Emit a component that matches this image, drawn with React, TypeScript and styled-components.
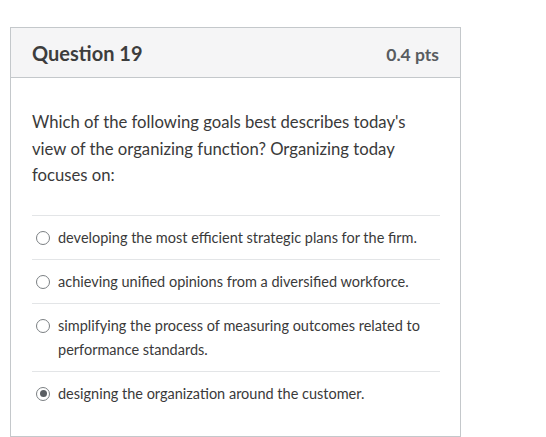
import React from 'react';
import styled, { createGlobalStyle } from 'styled-components';

const GlobalStyle = createGlobalStyle`
  html, body {
    margin: 0;
    padding: 0;
    background: #ffffff;
  }
  body {
    font-family: Lato, "Open Sans", "Liberation Sans", sans-serif;
    color: #3a3a3a;
  }
`;

const Page = styled.div`
  padding: 27px 0 0 10px;
`;

const Card = styled.div`
  width: 449px;
  border: 1px solid #c4c8cb;
  background: #ffffff;
`;

const Header = styled.div`
  display: flex;
  justify-content: space-between;
  align-items: center;
  height: 50px;
  padding: 0 21px 0 21px;
  background: #f5f5f6;
  border-bottom: 1px solid #c4c8cb;
  box-sizing: border-box;
`;

const Title = styled.h2`
  margin: 0;
  font-size: 20px;
  font-weight: 700;
  color: #3d3d3d;
`;

const Points = styled.span`
  font-size: 17.5px;
  font-weight: 700;
  color: #585c60;
  padding-top: 3px;
`;

const Body = styled.div`
  padding: 31px 20px 21px 21px;
`;

const QuestionText = styled.p`
  margin: 0 0 26px;
  font-size: 16.7px;
  line-height: 26.5px;
  color: #3a3a3a;
`;

const Answers = styled.div`
  border-top: 1px solid #e3e5e7;
`;

const Answer = styled.label<{ $last?: boolean }>`
  display: flex;
  align-items: flex-start;
  gap: 8px;
  padding: 10px 0 9px 4px;
  border-bottom: ${(p) => (p.$last ? 'none' : '1px solid #e3e5e7')};
  font-size: 14.5px;
  line-height: 24px;
  color: #3a3a3a;
`;

const Radio = styled.span<{ $checked?: boolean }>`
  flex: none;
  position: relative;
  width: 14px;
  height: 14px;
  margin-top: 5px;
  border-radius: 50%;
  border: 1px solid #7b7f83;
  box-sizing: border-box;
  background: #ffffff;

  &::after {
    content: '';
    display: ${(p) => (p.$checked ? 'block' : 'none')};
    position: absolute;
    left: 2.5px;
    top: 2.5px;
    width: 7px;
    height: 7px;
    border-radius: 50%;
    background: #5a5e62;
  }
`;

const answers = [
  'developing the most efficient strategic plans for the firm.',
  'achieving unified opinions from a diversified workforce.',
  'simplifying the process of measuring outcomes related to performance standards.',
  'designing the organization around the customer.',
];

export default function App() {
  const selected = 3;
  return (
    <Page>
      <GlobalStyle />
      <Card>
        <Header>
          <Title>Question 19</Title>
          <Points>0.4 pts</Points>
        </Header>
        <Body>
          <QuestionText>
            Which of the following goals best describes today's view of the organizing
            function? Organizing today focuses on:
          </QuestionText>
          <Answers>
            {answers.map((a, i) => (
              <Answer key={i} $last={i === answers.length - 1}>
                <Radio $checked={i === selected} />
                <span>{a}</span>
              </Answer>
            ))}
          </Answers>
        </Body>
      </Card>
    </Page>
  );
}
